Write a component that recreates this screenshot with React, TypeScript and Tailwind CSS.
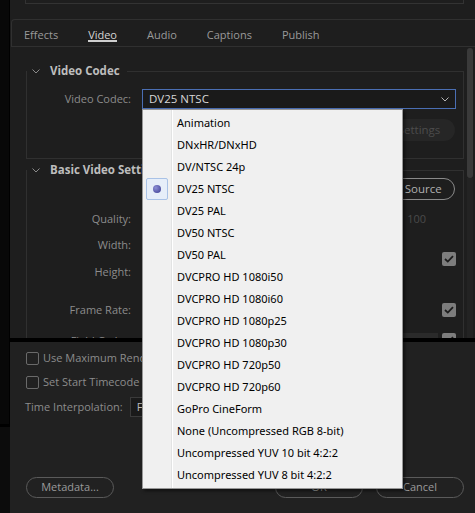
import React from 'react';

const CODECS = [
  'Animation', 'DNxHR/DNxHD', 'DV/NTSC 24p', 'DV25 NTSC', 'DV25 PAL', 'DV50 NTSC', 'DV50 PAL',
  'DVCPRO HD 1080i50', 'DVCPRO HD 1080i60', 'DVCPRO HD 1080p25', 'DVCPRO HD 1080p30',
  'DVCPRO HD 720p50', 'DVCPRO HD 720p60', 'GoPro CineForm', 'None (Uncompressed RGB 8-bit)',
  'Uncompressed YUV 10 bit 4:2:2', 'Uncompressed YUV 8 bit 4:2:2',
];

const TABS = ['Effects', 'Video', 'Audio', 'Captions', 'Publish'];

function Chevron({ className = '' }: { className?: string }) {
  return (
    <svg width="8" height="5" viewBox="0 0 8 5" className={className}>
      <path d="M0.5 0.5 L4 4 L7.5 0.5" fill="none" stroke="currentColor" strokeWidth="1" />
    </svg>
  );
}

function Check() {
  return (
    <div className="w-[14px] h-[14px] rounded-[2px] bg-[#7d7d7d] flex items-center justify-center">
      <svg width="10" height="8" viewBox="0 0 10 8">
        <path d="M1 4 L3.8 6.6 L9 1.2" fill="none" stroke="#1c1c1c" strokeWidth="1.8" />
      </svg>
    </div>
  );
}

function Legend({ title }: { title: string }) {
  return (
    <legend className="flex items-center pl-[5px] pr-[7px] h-[16px]">
      <Chevron className="text-[#8a8a8a]" />
      <span className="ml-[10px] text-[11.5px] leading-[16px] font-bold text-[#bdbdbd]">{title}</span>
    </legend>
  );
}

function Label({ children }: { children: React.ReactNode }) {
  return <div className="w-[104px] text-right text-[11px] text-[#8c8c8c]">{children}</div>;
}

function Pill({ children, className = '' }: { children: React.ReactNode; className?: string }) {
  return (
    <div className={`h-[21px] w-[88px] rounded-full border border-[#5a5a5a] flex items-center justify-center text-[11px] text-[#9a9a9a] ${className}`}>
      {children}
    </div>
  );
}

function CodecMenu() {
  return (
    <div className="absolute left-[142px] top-[109px] w-[261px] h-[380px] bg-[#f0f0f0] border border-[#979797] shadow-[2px_2px_3px_rgba(0,0,0,0.5)] py-[2px] font-['Noto_Sans',sans-serif]">
      {/* gutter separator */}
      <div className="absolute left-[28px] top-0 bottom-0 w-[1px] bg-[#e2e3e3]" />
      <div className="absolute left-[29px] top-0 bottom-0 w-[1px] bg-white" />
      {CODECS.map(c => (
        <div key={c} className="relative h-[22px] flex items-center">
          {c === 'DV25 NTSC' && (
            <div className="absolute left-[3px] top-0 w-[22px] h-[22px] rounded-[2px] border border-[#a9c2e6] bg-[#e6eef9] flex items-center justify-center">
              <div className="w-[8px] h-[8px] rounded-full bg-[radial-gradient(circle_at_35%_35%,#8d8fd6,#3a3b8f)]" />
            </div>
          )}
          <span className="pl-[34px] text-[11px] text-black whitespace-nowrap">{c}</span>
        </div>
      ))}
    </div>
  );
}

export default function App() {
  return (
    <div className="relative w-[475px] h-[513px] overflow-hidden bg-[#1e1e1e] flex font-['Open_Sans','Noto_Sans',sans-serif]">
      {/* left window edge */}
      <div className="w-[10px] flex flex-col">
        <div className="h-[424px] bg-[#080808] border-r border-[#000]" />
        <div className="h-[3px] bg-[#000]" />
        <div className="flex-1 bg-[#0c0c0c]" />
      </div>

      <div className="flex-1 flex flex-col">
        {/* previous panel bottom */}
        <div className="h-[19px]">
          <div className="ml-[15px] w-[439px] h-[4px] border-l border-r border-b border-[#333]" />
        </div>

        {/* tabs */}
        <div className="h-[28px] ml-[1px] border-t border-l border-b border-[#303030] rounded-tl-[4px] flex items-center pl-[12px] gap-[30px]">
          {TABS.map(t => (
            <div key={t} className="relative">
              <span className={`text-[11px] ${t === 'Video' ? 'text-[#d4d4d4]' : 'text-[#9a9a9a]'}`}>{t}</span>
              {t === 'Video' && <div className="absolute left-0 right-0 top-[19px] h-[2px] bg-[#cfcfcf]" />}
            </div>
          ))}
        </div>

        {/* settings scroll area */}
        <div className="h-[291px] flex overflow-hidden">
          <div className="flex-1 pl-[16px] pr-[3px]">
            <fieldset className="mt-[16px] border border-[#303030] pb-[17px]">
              <Legend title="Video Codec" />
              <div className="mt-[10px] flex items-center">
                <Label>Video Codec:</Label>
                <div className="ml-[11px] w-[314px] h-[20px] border border-[#4a6eb3] bg-[#1a1a1a] flex items-center justify-between pl-[6px] pr-[6px]">
                  <span className="text-[11.5px] text-[#d8d8d8]">DV25 NTSC</span>
                  <Chevron className="text-[#b5b5b5]" />
                </div>
              </div>
              <div className="mt-[10px] flex justify-end pr-[8px]">
                <div className="h-[22px] w-[72px] rounded-full bg-[#262626] flex items-center justify-center text-[11.5px] text-[#4c4c4c]">Settings</div>
              </div>
            </fieldset>

            <fieldset className="mt-[3px] border border-[#303030] pb-[10px]">
              <Legend title="Basic Video Settings" />
              <div className="flex justify-end pr-[8px]">
                <div className="h-[22px] w-[100px] rounded-full border border-[#8a8a8a] flex items-center justify-center text-[11.5px] text-[#b0b0b0]">Match Source</div>
              </div>
              <div className="mt-[8px] h-[22px] flex items-center">
                <Label>Quality:</Label>
                <div className="flex-1" />
                <span className="mr-[37px] text-[11px] text-[#4a4a4a]">100</span>
              </div>
              <div className="mt-[4px] flex items-center">
                <div className="flex-1 flex flex-col">
                  <div className="h-[22px] flex items-center"><Label>Width:</Label></div>
                  <div className="mt-[5px] h-[22px] flex items-center"><Label>Height:</Label></div>
                </div>
                <div className="mr-[7px]"><Check /></div>
              </div>
              <div className="mt-[16px] h-[22px] flex items-center">
                <Label>Frame Rate:</Label>
                <div className="flex-1" />
                <div className="mr-[7px]"><Check /></div>
              </div>
              <div className="mt-[10px] h-[22px] flex items-start pt-[2px]">
                <Label>Field Order:</Label>
                <div className="flex-1" />
                <div className="mr-[4px] w-[130px] h-[18px] bg-[#2a2a2a]" />
                <div className="mr-[7px]"><Check /></div>
              </div>
            </fieldset>
          </div>
          {/* scrollbar */}
          <div className="w-[8px] pt-[1px] pr-[1px] flex flex-col">
            <div className="h-[130px] w-[6px] rounded-full bg-[#3a3a3a]" />
            <div className="flex-1 w-[6px] bg-[#232323]" />
          </div>
        </div>

        <div className="h-[4px] bg-black" />

        {/* bottom options */}
        <div className="flex-1 bg-[#212121] pl-[16px] pr-[11px] pt-[8px] pb-[15px] flex flex-col">
          <div className="h-[16px] flex items-center">
            <div className="w-[13px] h-[13px] rounded-[2px] border-[1.5px] border-[#6a6a6a]" />
            <span className="ml-[4px] text-[11px] text-[#8c8c8c] whitespace-nowrap">Use Maximum Render Quality</span>
          </div>
          <div className="mt-[8px] h-[16px] flex items-center">
            <div className="w-[13px] h-[13px] rounded-[2px] border-[1.5px] border-[#6a6a6a]" />
            <span className="ml-[4px] text-[11px] text-[#8c8c8c]">Set Start Timecode</span>
          </div>
          <div className="mt-[7px] h-[20px] flex items-center -ml-[1px]">
            <span className="text-[11px] text-[#8c8c8c] whitespace-nowrap">Time Interpolation:</span>
            <div className="ml-[7px] w-[180px] h-[20px] border border-[#3a3a3a] bg-[#1a1a1a] flex items-center pl-[6px] text-[11px] text-[#bcbcbc]">Frame Sampling</div>
          </div>
          <div className="mt-auto flex items-center">
            <Pill>Metadata...</Pill>
            <div className="flex-1" />
            <Pill>OK</Pill>
            <Pill className="ml-[13px]">Cancel</Pill>
          </div>
        </div>
      </div>

      <CodecMenu />
    </div>
  );
}
